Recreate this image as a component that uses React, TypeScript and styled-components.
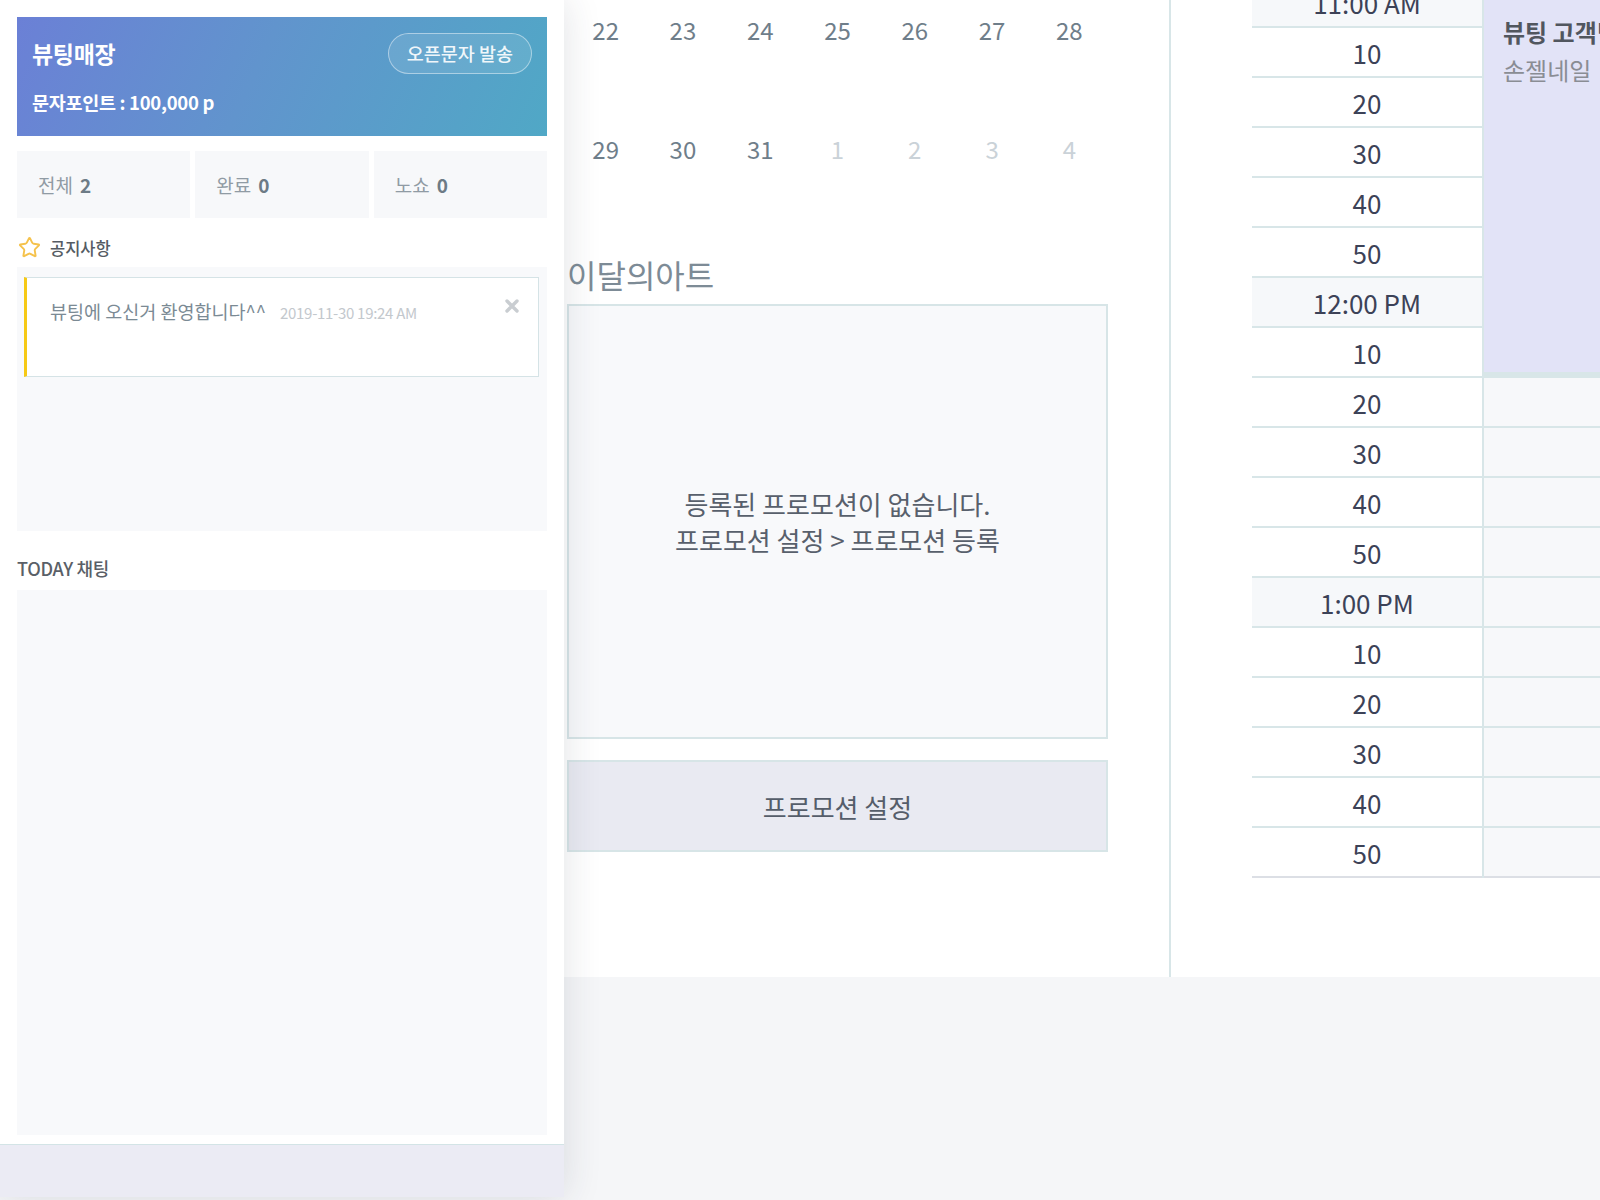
import React from "react";
import styled, { createGlobalStyle } from "styled-components";
import { Star } from "lucide-react";

const GlobalStyle = createGlobalStyle`
  html, body {
    margin: 0;
    padding: 0;
    width: 1600px;
    height: 1200px;
    overflow: hidden;
    background: #e2e4e6;
  }
  body {
    font-family: "Noto Sans CJK KR", "Noto Sans", sans-serif;
  }
  * {
    box-sizing: border-box;
  }
`;

const calendarRows = [
  [
    { day: 22 },
    { day: 23 },
    { day: 24 },
    { day: 25 },
    { day: 26 },
    { day: 27 },
    { day: 28 },
  ],
  [
    { day: 29 },
    { day: 30 },
    { day: 31 },
    { day: 1, next: true },
    { day: 2, next: true },
    { day: 3, next: true },
    { day: 4, next: true },
  ],
];

const hours = ["11:00 AM", "12:00 PM", "1:00 PM"];
const minutes = ["10", "20", "30", "40", "50"];
const timeRows = hours.flatMap((h) => [
  { label: h, hour: true },
  ...minutes.map((m) => ({ label: m, hour: false })),
]);

const stats = [
  { label: "전체", value: 2 },
  { label: "완료", value: 0 },
  { label: "노쇼", value: 0 },
];

const CloseIcon = () => (
  <svg width="14" height="14" viewBox="0 0 14 14">
    <path
      d="M2 2 L12 12 M12 2 L2 12"
      stroke="#c9cdd1"
      strokeWidth="3.4"
      strokeLinecap="round"
    />
  </svg>
);

const App = () => {
  return (
    <Page>
      <GlobalStyle />
      <Sidebar>
        <ShopCard>
          <ShopTop>
            <ShopName>뷰팅매장</ShopName>
            <PillButton type="button">오픈문자 발송</PillButton>
          </ShopTop>
          <Points>문자포인트 : 100,000 p</Points>
        </ShopCard>

        <StatRow>
          {stats.map((s) => (
            <StatBox key={s.label}>
              <span>{s.label}</span>
              <b>{s.value}</b>
            </StatBox>
          ))}
        </StatRow>

        <NoticeTitle>
          <Star size={23} color="#f5c24c" strokeWidth={2} />
          <span>공지사항</span>
        </NoticeTitle>
        <NoticeArea>
          <NoticeCard>
            <NoticeText>뷰팅에 오신거 환영합니다^^</NoticeText>
            <NoticeDate>2019-11-30 19:24 AM</NoticeDate>
            <CloseButton>
              <CloseIcon />
            </CloseButton>
          </NoticeCard>
        </NoticeArea>

        <SectionLabel>TODAY 채팅</SectionLabel>
        <ChatArea />
        <SideFooter />
      </Sidebar>

      <Main>
        <TopSection>
          <MiddleColumn>
            <Calendar>
              {calendarRows.map((row, i) => (
                <CalendarRow key={i}>
                  {row.map((c) => (
                    <DayCell key={`${i}-${c.day}`} $next={!!c.next}>
                      {c.day}
                    </DayCell>
                  ))}
                </CalendarRow>
              ))}
            </Calendar>

            <ArtTitle>이달의아트</ArtTitle>
            <PromoBox>
              <p>
                등록된 프로모션이 없습니다.
                <br />
                프로모션 설정 &gt; 프로모션 등록
              </p>
            </PromoBox>
            <PromoButton type="button">프로모션 설정</PromoButton>
          </MiddleColumn>

          <ScheduleColumn>
            <ScheduleBody>
              <TimeColumn>
                {timeRows.map((r, i) => (
                  <TimeCell key={i} $hour={r.hour}>
                    {r.label}
                  </TimeCell>
                ))}
              </TimeColumn>
              <EventColumn>
                <EventBlock>
                  <strong>뷰팅 고객님</strong>
                  <span>손젤네일</span>
                </EventBlock>
                {timeRows.slice(8).map((_, i) => (
                  <EmptySlot key={i} />
                ))}
              </EventColumn>
            </ScheduleBody>
          </ScheduleColumn>
        </TopSection>
        <BottomFill />
      </Main>
    </Page>
  );
};

export default App;

const Page = styled.div`
  display: flex;
  width: 1600px;
  height: 1200px;
  background: #f5f6f8;
`;

const Sidebar = styled.aside`
  position: relative;
  z-index: 2;
  width: 564px;
  height: 1197px;
  flex-shrink: 0;
  display: flex;
  flex-direction: column;
  padding: 17px 17px 0;
  background: #fff;
  box-shadow: 0 0 36px rgba(40, 50, 70, 0.14);
`;

const ShopCard = styled.div`
  height: 119px;
  padding: 16px 15px 0 15px;
  background: linear-gradient(115deg, #6b80d6 0%, #6194cd 45%, #50a8c6 100%);
  color: #fff;
`;

const ShopTop = styled.div`
  display: flex;
  align-items: center;
  justify-content: space-between;
  height: 40px;
`;

const ShopName = styled.h1`
  margin: 0;
  font-size: 23px;
  font-weight: 700;
  letter-spacing: -0.3px;
`;

const PillButton = styled.button`
  height: 41px;
  padding: 0 18px;
  border-radius: 21px;
  border: 1px solid rgba(255, 255, 255, 0.45);
  background: rgba(255, 255, 255, 0.1);
  color: rgba(255, 255, 255, 0.92);
  font-family: inherit;
  font-size: 18.5px;
  font-weight: 500;
`;

const Points = styled.div`
  margin-top: 17px;
  font-size: 18.5px;
  font-weight: 700;
  line-height: 24px;
  letter-spacing: -0.3px;
`;

const StatRow = styled.div`
  display: grid;
  grid-template-columns: repeat(3, 1fr);
  gap: 5px;
  margin-top: 15px;
`;

const StatBox = styled.div`
  display: flex;
  align-items: center;
  gap: 7px;
  height: 67px;
  padding-left: 21px;
  background: #f7f8fa;
  font-size: 19px;
  color: #909ba4;

  b {
    color: #6d7b86;
    font-weight: 700;
  }
`;

const NoticeTitle = styled.div`
  display: flex;
  align-items: center;
  gap: 9px;
  height: 49px;
  padding: 10px 0 0 1px;
  font-size: 16.5px;
  font-weight: 500;
  color: #555b63;
`;

const NoticeArea = styled.div`
  height: 264px;
  padding: 10px 8px 0 7px;
  background: #f8f9fb;
`;

const NoticeCard = styled.div`
  position: relative;
  display: flex;
  align-items: baseline;
  gap: 14px;
  height: 100px;
  padding: 20px 0 0 23px;
  background: #fff;
  border: 1px solid #d5e3e6;
  border-left: 3px solid #f6c915;
`;

const NoticeText = styled.span`
  font-size: 18.5px;
  color: #7b8a94;
`;

const NoticeDate = styled.span`
  font-size: 15px;
  color: #c3c8cd;
  letter-spacing: -0.3px;
`;

const CloseButton = styled.span`
  position: absolute;
  top: 21px;
  right: 19px;
  display: flex;
`;

const SectionLabel = styled.div`
  margin-top: 26px;
  line-height: 22px;
  font-size: 18px;
  font-weight: 500;
  color: #5a5f67;
  letter-spacing: -0.3px;
`;

const ChatArea = styled.div`
  flex: 1;
  margin: 11px 0 9px;
  background: #f8f9fb;
`;

const SideFooter = styled.div`
  height: 53px;
  margin: 0 -17px;
  border-top: 1px solid #d3e4e6;
  background: #ebebf4;
`;

const Main = styled.main`
  flex: 1;
  display: flex;
  flex-direction: column;
  min-width: 0;
`;

const TopSection = styled.section`
  display: flex;
  height: 977px;
  background: #fff;
`;

const MiddleColumn = styled.div`
  width: 607px;
  flex-shrink: 0;
  padding: 0 61px 0 3px;
  border-right: 2px solid #d8e6e8;
  overflow: hidden;
`;

const Calendar = styled.div`
  display: flex;
  flex-direction: column;
`;

const CalendarRow = styled.div`
  display: grid;
  grid-template-columns: repeat(7, 1fr);
  height: 119px;
`;

const DayCell = styled.div<{ $next: boolean }>`
  padding-top: 12px;
  text-align: center;
  font-size: 24px;
  line-height: 36px;
  color: ${(p) => (p.$next ? "#cad2d8" : "#6f7e8a")};
`;

const ArtTitle = styled.h2`
  margin: 16px 0 0;
  font-size: 32px;
  line-height: 40px;
  font-weight: 400;
  color: #7d8b96;
`;

const PromoBox = styled.div`
  display: flex;
  align-items: center;
  justify-content: center;
  height: 435px;
  margin-top: 10px;
  background: #f8f9fb;
  border: 2px solid #d7e5e7;

  p {
    margin: 0;
    text-align: center;
    font-size: 26px;
    line-height: 36px;
    color: #58606c;
  }
`;

const PromoButton = styled.button`
  display: block;
  width: 100%;
  height: 92px;
  margin-top: 21px;
  background: #e9eaf2;
  border: 2px solid #d7e5e7;
  font-family: inherit;
  font-size: 26px;
  color: #555d6a;
`;

const ScheduleColumn = styled.div`
  flex: 1;
  padding-left: 81px;
  overflow: hidden;
`;

const ScheduleBody = styled.div`
  display: flex;
  margin-top: -22px;
`;

const TimeColumn = styled.div`
  width: 232px;
  flex-shrink: 0;
  border-right: 2px solid #d8e6e8;
`;

const TimeCell = styled.div<{ $hour: boolean }>`
  display: flex;
  align-items: center;
  justify-content: center;
  height: 50px;
  border-bottom: 2px solid #d8e6e8;
  background: ${(p) => (p.$hour ? "#f6f8fa" : "#fff")};
  font-size: 26px;
  color: #3c4257;

  &:last-child {
    border-bottom-color: #dcdfe5;
  }
`;

const EventColumn = styled.div`
  flex: 1;
  min-width: 0;
`;

const EventBlock = styled.div`
  display: flex;
  flex-direction: column;
  height: 400px;
  padding: 35px 0 0 19px;
  background: #e2e3f7;
  border-bottom: 6px solid #d8e6e8;
  white-space: nowrap;
  font-size: 24px;
  line-height: 38px;

  strong {
    color: #51565f;
    font-weight: 700;
  }

  span {
    color: #8a8d94;
  }
`;

const EmptySlot = styled.div`
  height: 50px;
  background: #f7f8fa;
  border-bottom: 2px solid #d8e6e8;

  &:last-child {
    border-bottom-color: #dcdfe5;
  }
`;

const BottomFill = styled.div`
  flex: 1;
  background: #f5f6f8;
`;
